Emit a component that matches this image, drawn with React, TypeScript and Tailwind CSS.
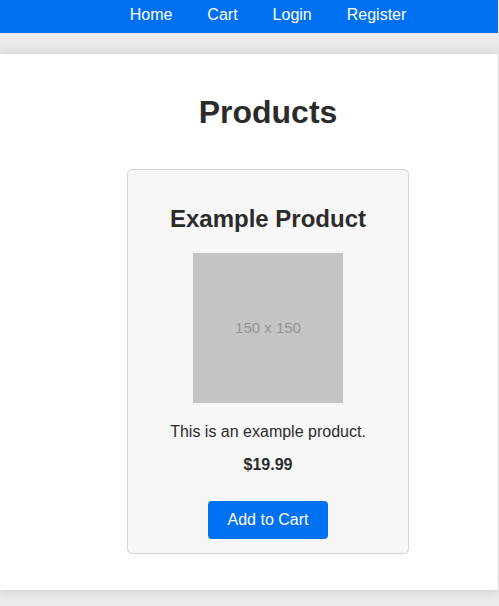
const links = ["Home", "Cart", "Login", "Register"];

const ProductCard = () => {
  return (
    <div className="w-[282px] mx-auto border border-[#d6d6d6] rounded-[5px] bg-[#f7f7f7] pt-[35px] pb-[14px] flex flex-col items-center">
      <h2 className="text-[24px] leading-[28px] font-bold text-[#2b2b2b]">Example Product</h2>
      <div className="mt-[20px] w-[150px] h-[150px] bg-[#c4c4c4] flex items-center justify-center text-[15px] text-[#949494]">
        150 x 150
      </div>
      <p className="mt-[20px] text-[16px] leading-[18px] text-[#2b2b2b]">This is an example product.</p>
      <p className="mt-[15px] text-[16px] leading-[18px] font-bold text-[#2b2b2b]">$19.99</p>
      <button className="mt-[27px] w-[120px] h-[38px] rounded-[4px] bg-[#0070f3] text-white text-[16px]">
        Add to Cart
      </button>
    </div>
  );
};

export default function App() {
  return (
    <div className="min-h-[606px] bg-[#ebebeb] font-['Liberation_Sans',Arial,sans-serif] overflow-hidden">
      <nav className="w-[498px] h-[33px] bg-[#0070f3] flex justify-center pl-[38px]">
        {links.map((l) => (
          <a key={l} href="#" className="px-[17.5px] leading-[30px] text-[16px] text-white">
            {l}
          </a>
        ))}
      </nav>
      <main className="mt-[21px] w-[498px] h-[536px] bg-white shadow-[0_0_12px_rgba(0,0,0,0.16)] pt-[40px] pl-[38px]">
        <h1 className="text-center text-[32px] leading-[37px] font-bold text-[#2b2b2b]">Products</h1>
        <div className="mt-[38px]">
          <ProductCard />
        </div>
      </main>
    </div>
  );
}
